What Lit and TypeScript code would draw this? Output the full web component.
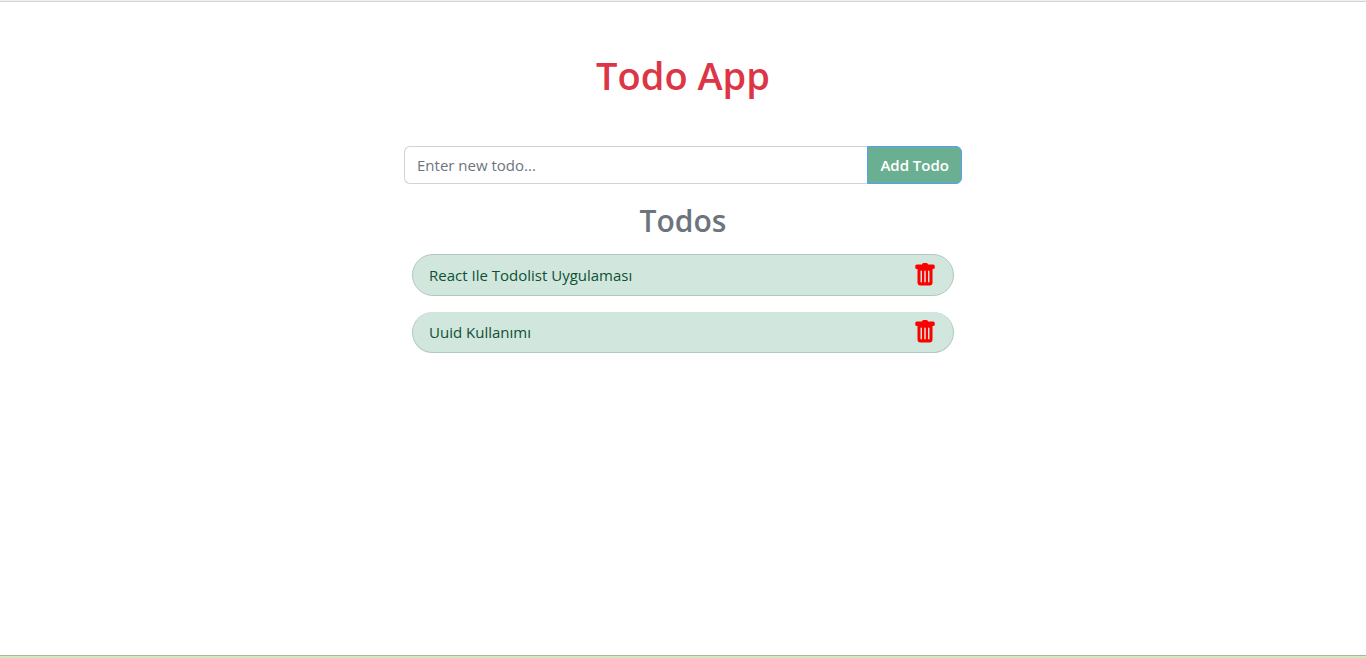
import { LitElement, html, css } from "lit";
import { customElement, state } from "lit/decorators.js";

interface Todo {
  id: number;
  text: string;
}

@customElement("app-root")
export class AppRoot extends LitElement {
  static styles = css`
    :host {
      display: block;
      font-family: "Segoe UI", "Open Sans", "Noto Sans", sans-serif;
      font-size: 15px;
      line-height: 24px;
      color: #212529;
    }
    *, *::before, *::after { box-sizing: border-box; }
    .page {
      min-height: 100vh;
      display: flex;
      flex-direction: column;
      background: #fff;
      border-top: 1px solid #f0f0f0;
    }
    .content {
      flex: 1;
      width: 100%;
      max-width: 574px;
      margin: 0 auto;
      padding: 49px 8px 0;
    }
    .rule { height: 1px; background: #d4d4d4; }
    .title {
      margin: 0 0 47px;
      text-align: center;
      font-size: 38px;
      line-height: 48px;
      font-weight: 600;
      color: #dc3545;
    }
    .entry { display: flex; }
    .field {
      flex: 1;
      min-width: 0;
      height: 38px;
      padding: 6px 12px;
      border: 1px solid #ced4da;
      border-right: 0;
      border-radius: 6px 0 0 6px;
      background: #fff;
      color: inherit;
      font: inherit;
    }
    .field::placeholder { color: #6c757d; opacity: 1; }
    .add {
      height: 38px;
      padding: 0 12px;
      border: 1px solid #5a9df5;
      border-radius: 0 6px 6px 0;
      background: #6aaf91;
      color: #fff;
      font: inherit;
      font-weight: 600;
    }
    .subtitle {
      margin: 18px 0 14px;
      text-align: center;
      font-size: 30px;
      line-height: 38px;
      font-weight: 600;
      color: #6c757d;
    }
    .list {
      list-style: none;
      margin: 0;
      padding: 0 8px;
      display: flex;
      flex-direction: column;
      gap: 16px;
    }
    .item {
      display: flex;
      align-items: center;
      justify-content: space-between;
      padding: 8px 16px;
      border: 1px solid #b4c8be;
      border-radius: 24px;
      background: #d1e7dd;
      color: #0f5132;
    }
    .item + .item { border-top: 0; }
    .remove {
      display: flex;
      padding: 0;
      border: 0;
      background: none;
      color: #f00;
    }
    .footer { height: 3px; border-top: 1px solid #a9b89b; background: #d3e8be; }
  `;

  @state() private todos: Todo[] = [
    { id: 1, text: "React Ile Todolist Uygulaması" },
    { id: 2, text: "Uuid Kullanımı" },
  ];

  private add(e: Event) {
    e.preventDefault();
    const field = this.renderRoot.querySelector("input")!;
    const text = field.value.trim();
    if (!text) return;
    this.todos = [...this.todos, { id: Date.now(), text }];
    field.value = "";
  }

  private remove(id: number) {
    this.todos = this.todos.filter((t) => t.id !== id);
  }

  render() {
    return html`
      <div class="page">
        <div class="rule"></div>
        <main class="content">
          <h1 class="title">Todo App</h1>
          <form class="entry" @submit=${this.add}>
            <input class="field" type="text" aria-label="New todo" placeholder="Enter new todo..." />
            <button class="add" type="submit">Add Todo</button>
          </form>
          <h2 class="subtitle">Todos</h2>
          <ul class="list">
            ${this.todos.map(
              (t) => html`<li class="item">
                <span>${t.text}</span>
                <button class="remove" type="button" aria-label="Delete" @click=${() => this.remove(t.id)}>
                  <svg width="24" height="24" viewBox="0 0 16 16" fill="currentColor">
                    <path d="M2.5 1a1 1 0 0 0-1 1v1a1 1 0 0 0 1 1H3v9a2 2 0 0 0 2 2h6a2 2 0 0 0 2-2V4h.5a1 1 0 0 0 1-1V2a1 1 0 0 0-1-1H10a1 1 0 0 0-1-1H7a1 1 0 0 0-1 1H2.5zm3 4a.5.5 0 0 1 .5.5v7a.5.5 0 0 1-1 0v-7a.5.5 0 0 1 .5-.5zM8 5a.5.5 0 0 1 .5.5v7a.5.5 0 0 1-1 0v-7A.5.5 0 0 1 8 5zm3 .5v7a.5.5 0 0 1-1 0v-7a.5.5 0 0 1 1 0z" />
                  </svg>
                </button>
              </li>`
            )}
          </ul>
        </main>
        <footer class="footer"></footer>
      </div>
    `;
  }
}
